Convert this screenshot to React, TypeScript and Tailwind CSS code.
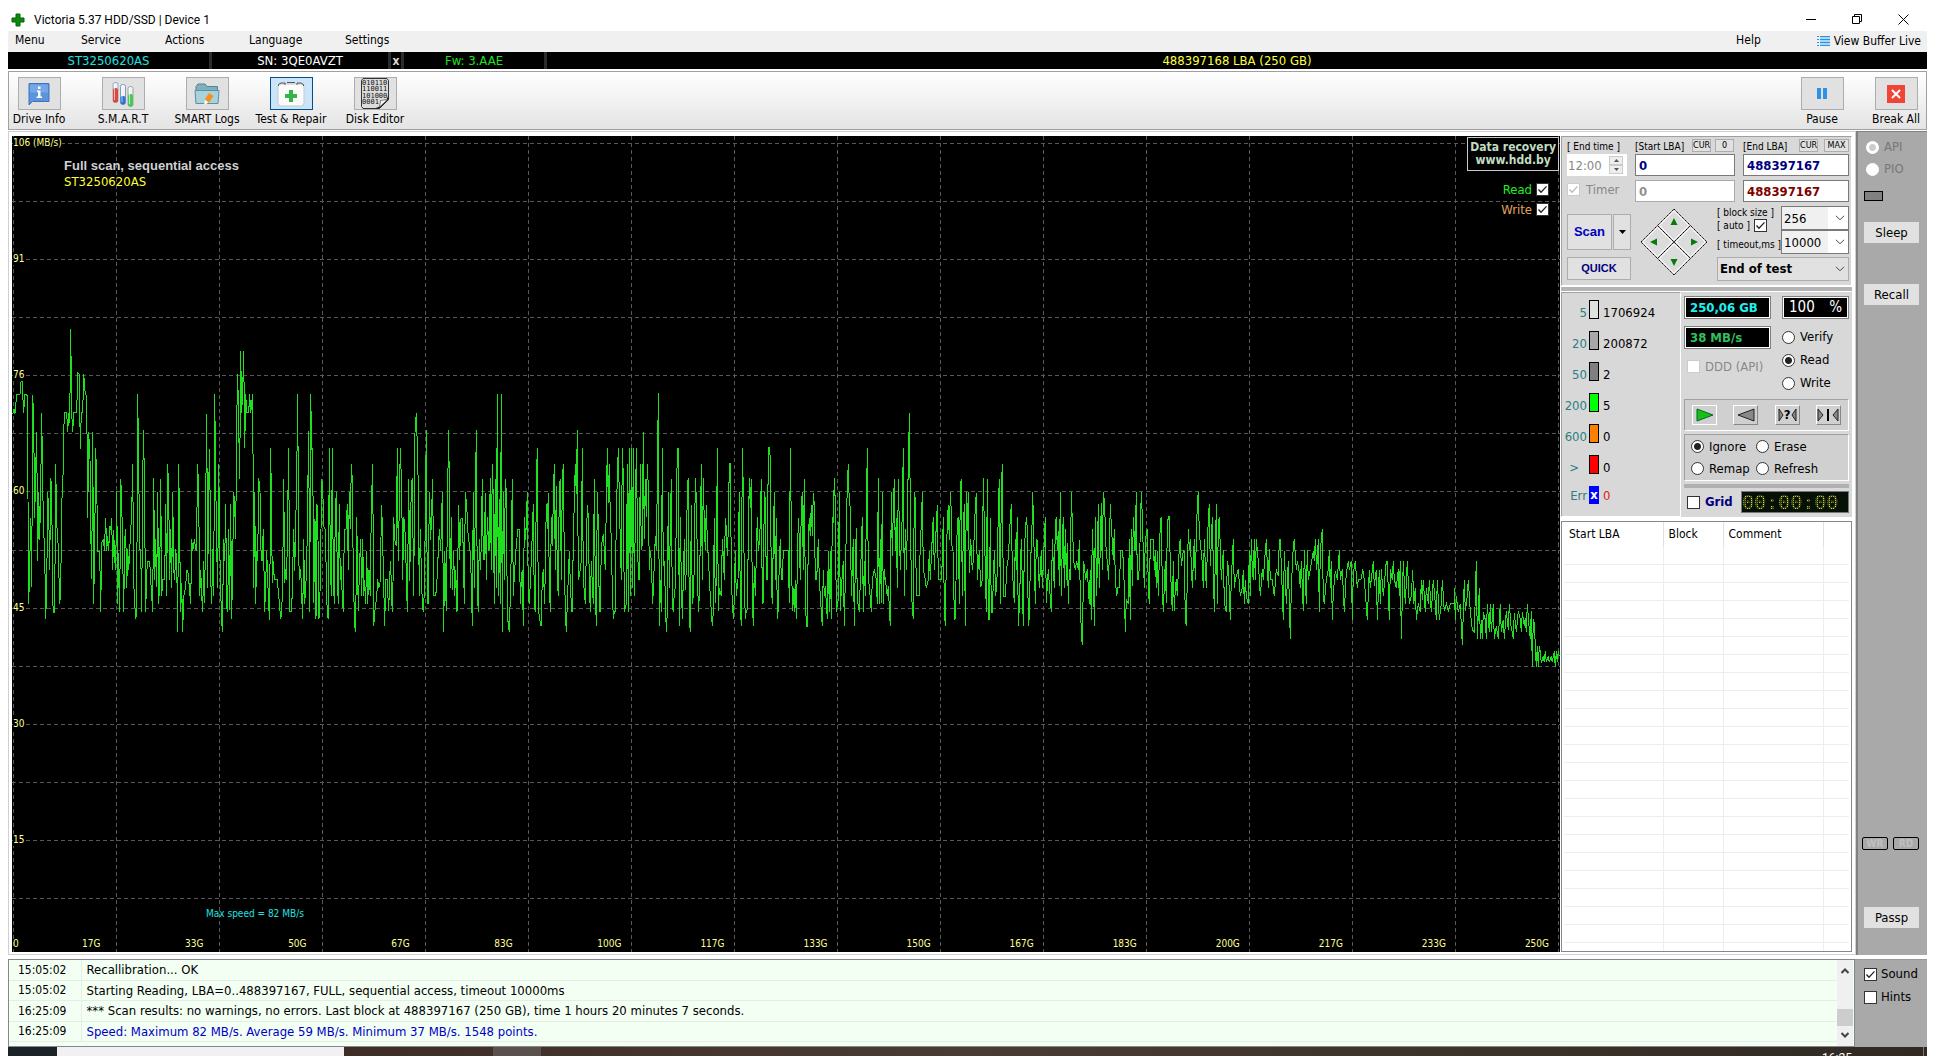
import { ReactNode } from "react";
import clsx from "clsx";

interface TraceBlock {
    x: number;
    y: number;
    points: string;
}

// Read speed curve. Every block has its own origin, points are "x,y" in thirds of a plot unit
const trace: TraceBlock[] = [
    {
        x: 0,
        y: 320,
        points:
            "38,285 42,270 45,283 50,225 60,225 65,162 68,225 71,280 74,225 82,228 84,540 86,852 89,740 92,595 95,803 98,226 101,310 104,597 107,450 110,337 113,725 116,517 119,660 122,505 125,280 128,500 131,635 134,700 137,898 140,810 143,517 146,575 149,750 152,475 155,510 158,850 161,878 164,878 167,433 170,620 173,640 176,740 179,852 182,820 185,540 188,530 191,332 194,280 200,280 203,337 206,282 209,310 212,28 215,280 218,337 221,280 230,280 233,160 238,165 241,388 244,280 248,280 251,163 256,225 260,228 263,597 266,337 270,420 272,625 275,778 278,337 281,852 284,670 287,385 290,490 293,695 299,695 302,878 305,670 311,660 313,695 317,595 320,695 323,650 326,695 329,620 332,630 335,595 338,750 341,632 344,720 347,750 350,515 353,852 356,700 359,877 362,478 365,540 371,877 374,660 377,628 380,805 383,690 386,750 392,635 395,580 398,433 401,790 404,850 407,898 410,880 413,223 416,445 419,690 422,690 425,877 428,465 431,332 434,595 437,877 440,760 443,725 449,725 452,780 458,877 461,475 464,780 467,660 470,802 473,518 476,852 479,780 482,478 485,828 488,780 494,780 497,555 500,828 503,433 506,518 509,780 512,630 515,805 518,518 521,750 524,780 527,690 530,720 533,937 536,433 539,660 542,877 545,790 548,937 551,830 557,800 560,752 563,752 566,780 572,852 575,660 578,695 583,660 589,695 593,433 596,530 599,830 602,750 605,828 608,878 611,725 614,850 617,545 620,283 623,805 626,490 629,388 632,780 635,852 638,690 641,830 644,223 647,480 650,690 653,805 656,433 659,660 661,780 664,870 667,937 671,660 674,725 677,555 680,865 683,877 686,628 689,870 692,555 695,898 698,725 701,517 704,560 707,660 710,300 713,163 716,320 719,480 722,94 725,280 728,210 731,94 734,387 737,225 740,280 746,280 749,223 752,280 758,223 761,805 764,517 767,852 770,695 773,725 776,475 780,517 783,690 786,725 790,630 794,877 800,695 806,860 809,900 812,385 815,620 817,790 820,725 823,780 832,780 838,850 842,898 845,878 848,780 851,478 854,790 857,750 860,780 863,570 866,387 869,877 875,877 881,628 884,755 890,475 893,223 896,720 899,780 902,750 905,830 908,898 911,660 914,852 920,750 923,530 926,335 929,877 932,223 935,390 938,387 941,850 945,600 948,898 951,555",
    },
    {
        x: 310,
        y: 380,
        points:
            "24,480 27,718 30,640 33,450 35,298 38,320 41,440 46,450 49,590 52,710 55,718 58,205 61,530 64,650 67,205 70,590 73,672 76,395 79,338 82,590 85,672 88,375 91,600 94,560 97,660 100,697 103,450 108,450 112,375 115,572 118,338 121,450 124,253 127,300 130,590 134,740 137,757 140,412 145,695 149,540 152,480 155,650 158,480 161,650 164,600 167,672 170,514 173,672 177,570 181,650 184,385 188,253 191,740 194,700 200,650 203,600 206,625 210,610 215,376 218,490 224,740 227,600 231,598 236,695 239,590 242,545 245,670 248,697 251,412 254,480 259,500 262,205 265,545 268,375 271,205 275,330 278,600 281,412 284,430 287,514 292,697 296,298 299,605 304,315 307,295 311,650 315,160 319,100 322,200 325,320 328,650 331,450 335,620 338,690 341,695 344,570 349,151 352,672 355,672 358,338 362,480 368,298 371,648 377,648 380,620 388,450 392,514 397,338 401,757 404,515 407,630 409,694 413,320 416,151 419,450 421,625 424,412 427,630 431,514 434,650 437,570 441,697 446,376 449,540 452,420 456,415 460,510 463,672 466,338 470,376 474,460 480,514 484,600 487,740 490,338 493,625 496,376 499,151 502,640 505,697 508,480 512,572 517,298 520,540 523,540 526,340 529,600 532,412 537,514 541,295 544,572 547,253 550,360 553,672 556,298 559,625 562,45 565,650 568,360 571,672 574,45 577,757 580,338 583,600 586,298 589,338 592,690 595,740 598,757 601,650 604,514 607,298 610,650 613,590 618,510 623,450 628,450 631,672 634,600 637,570 640,740 643,412 647,480 652,338 655,650 658,672 664,545 670,375 673,672 676,697 679,325 682,205 685,690 689,718 693,740 697,600 700,570 704,672 709,375 712,450 715,340 718,610 721,697 724,412 727,500 730,365 733,253 736,570 739,320 742,590 745,650 748,320 751,298 754,600 757,312 760,253 763,540 766,690 769,757 772,672 778,514 781,610 785,697 787,697 790,480 796,253 799,345 802,151 805,600 808,590 814,545 817,205 820,600 826,672 829,514 832,376 835,412 838,610 841,697 844,545 847,610 850,672 853,298 856,625 859,740 862,338 865,430 868,697 871,697 874,500 880,465 883,514 886,570 889,376 892,205 895,370 898,253 901,410 904,480 907,630 910,718 913,697 916,697 919,395 925,205 929,412 934,600 937,205 940,290 943,697 949,672 952,253 955,697 958,205 961,650 964,205 967,625 970,205 973,650 979,205 982,412 985,600",
    },
    {
        x: 630,
        y: 380,
        points:
            "28,600 31,253 34,512 37,496 40,157 43,480 46,300 49,412 52,253 55,320 58,570 61,515 64,545 68,672 71,600 76,470 79,510 82,320 85,42 88,740 91,600 94,697 97,207 100,560 103,545 106,650 109,757 112,700 115,338 118,625 121,450 124,298 127,672 130,697 133,640 136,625 142,207 145,207 148,740 151,412 154,600 157,718 163,480 166,630 169,570 172,320 175,295 178,715 181,757 184,376 187,672 190,650 193,560 196,295 199,355 205,697 208,650 211,480 214,253 217,600 220,295 223,430 226,512 229,376 232,480 238,590 241,650 247,740 250,697 253,415 256,670 259,600 262,207 265,695 268,625 274,650 277,480 280,530 283,600 286,415 289,445 292,530 295,450 298,253 301,253 304,560 307,680 311,718 316,514 319,650 324,600 328,338 331,670 334,740 337,205 340,330 343,600 346,718 349,695 352,690 355,480 358,295 361,385 364,298 367,650 370,740 373,560 376,650 382,412 385,515 388,490 391,430 394,298 397,672 400,670 403,338 406,360 409,600 412,600 415,205 418,205 421,235 424,610 427,672 430,480 433,338 436,600 439,415 442,718 445,690 448,545 451,480 454,600 457,600 460,514 475,514 478,670 481,207 484,430 487,695 490,625 493,697 496,600 499,718 502,570 505,415 508,480 511,600 514,376 517,338 520,570 523,298 526,630 529,740 532,740 535,480 538,415 541,470 544,376 547,470 550,340 553,376 556,600 560,600 565,480 568,600 571,650 577,740 580,570 583,650 586,620 592,718 595,514 598,697 601,514 604,718 607,412 610,430 613,295 616,370 619,697 625,660 628,338 631,695 634,630 640,545 643,740 646,600 649,450 652,320 655,253 658,376 661,380 664,650 670,480 673,740 676,560 679,447 682,660 688,697 692,570 697,412 700,697 703,545 706,650 709,410 712,205 715,600 718,620 724,697 727,600 733,570 739,600 742,672 745,295 748,672 751,480 754,670 757,338 760,672 763,570 766,600 772,650 775,620 781,740 784,338 787,530 790,390 793,298 796,515 799,415 802,625 805,298 808,430 811,570 817,405 820,205 823,650 826,450 830,570 833,300 835,300 838,100 841,376 844,610 847,690 850,718 853,338 856,360 859,648 868,648 871,480 874,440 877,338 880,570 886,600 889,625 895,600 898,514 901,600 907,470 910,412 913,570 916,500 922,376 925,600 934,600 937,545 940,412 943,690 946,740 949,545 952,430 955,376 958,480 961,338",
    },
    {
        x: 950,
        y: 400,
        points:
            "2,280 6,440 9,455 12,600 15,660 18,545 22,370 25,352 28,612 31,260 34,238 37,590 40,400 43,315 46,680 49,278 52,395 55,278 58,520 62,420 67,512 70,480 76,320 79,280 82,540 88,455 92,562 97,540 100,235 103,376 109,638 112,238 115,660 118,660 121,355 124,638 127,638 133,455 137,590 142,520 145,330 148,238 151,612 154,275 157,193 160,590 166,590 172,485 175,480 179,390 184,315 187,510 193,610 196,420 199,510 202,352 205,680 208,625 214,420 220,680 223,450 229,352 232,385 235,680 238,655 241,500 245,420 248,278 251,400 256,612 259,420 262,422 268,565 274,453 277,565 283,420 286,352 289,610 295,510 304,638 307,420 313,565 316,380 319,352 322,450 325,395 328,560 331,278 334,590 337,430 340,352 343,565 346,388 349,540 352,430 355,612 358,510 361,540 364,278 368,400 371,485 376,510 380,485 385,510 388,422 391,590 394,705 397,737 401,485 407,540 412,510 418,612 421,510 424,660 427,388 430,480 433,680 436,352 440,590 445,315 448,565 454,312 457,510 460,278 464,315 467,430 476,540 481,315 484,375 490,480 493,390 496,540 500,590 503,565 508,565 512,453 518,453 523,560 526,697 529,600 535,612 538,420 541,660 544,388 547,560 550,352 555,455 559,278 562,540 566,540 570,430 574,278 577,350 583,565 586,420 592,388 595,570 598,612 601,420 610,420 613,510 616,453 619,565 622,455 625,590 631,370 634,352 637,560 640,638 646,485 649,610 652,380 655,352 658,352 661,500 667,635 670,485 673,635 676,565 679,540 682,590 688,440 691,420 694,500 700,453 703,455 706,660 709,680 712,540 715,388 718,450 721,420 727,565 733,420 736,540 742,310 745,278 748,400 757,490 760,565 763,420 769,565 775,350 778,315 781,500 787,352 793,638 799,315 802,612 805,375 808,352 814,540 820,453 823,610 829,638 832,485 835,500 841,660 844,540 850,420 853,565 856,540 865,510 871,590 877,565 880,510 883,612 886,540 889,590 895,612",
    },
    {
        x: 1200,
        y: 400,
        points:
            "148,453 151,590 154,420 157,510 160,540 163,420 166,540 169,420 175,485 181,590 187,510 190,540 196,455 199,420 205,565 208,450 211,540 217,540 223,590 229,510 235,530 238,420 241,420 244,500 250,660 253,455 259,612 265,485 271,718 274,565 280,440 283,420 289,510 292,485 298,520 301,565 304,485 310,635 313,453 319,612 322,453 325,540 331,510 340,455 343,485 346,420 350,510 355,420 358,638 361,455 367,388 370,600 373,612 379,540 385,510 388,453 391,565 394,485 397,660 400,580 406,515 412,540 418,453 421,540 427,510 433,638 439,520 445,485 448,510 454,485 457,660 460,520 466,485 472,565 475,540 484,538 488,510 493,540 502,660 508,510 511,565 520,485 523,560 529,510 532,660 538,510 541,612 544,510 550,590 559,485 562,485 568,660 571,510 577,540 580,485 583,540 589,565 595,510 598,590 601,485 604,718 610,485 616,612 622,485 628,612 634,590 638,510 641,612 646,565 649,660 655,612 661,638 664,540 667,600 670,540 676,638 679,565 685,612 688,540 694,638 700,540 706,612 709,660 712,540 718,660 724,612 727,540 733,635 739,612 745,635 751,612 763,612 763,565 766,660 769,590 775,638 781,612 787,737 793,540 796,635 802,590 805,540 811,635 817,690 823,697 826,590 829,485 832,718 838,565 841,718 844,660 847,718 850,638 856,660 859,718 862,612 868,697 871,612 874,697 880,612 883,718 889,680 892,700 895,718 901,612 904,697 910,660 913,718 919,635 925,690 928,612 934,690 937,697 940,718 943,640 949,697 955,635 961,660 964,697 967,638 973,680 976,655 979,697 982,612 988,690 991,718 994,635 997,803 1000,660 1003,670 1006,738 1009,803 1012,738 1015,803 1018,738 1021,755 1024,790 1030,770 1033,788 1036,755 1039,788 1045,770 1048,788 1054,770 1057,788 1060,770 1063,755 1066,803 1069,755 1072,788 1075,755 1078,770",
    },
];

const tracePoints = trace
    .flatMap((block) =>
        block.points.split(" ").map((pair) => {
            const [px, py] = pair.split(",").map(Number);
            return `${(block.x + px / 3).toFixed(1)},${(block.y + py / 3).toFixed(1)}`;
        })
    )
    .join(" ");

// Plot area
const PLOT = { x: 12, y: 137, width: 1548, height: 815 };

const verticals = Array.from({ length: 16 }, (_, i) => 13 + i * 103);
const horizontals = Array.from({ length: 14 }, (_, i) => 144 + i * 58);

const speedLabels = ["106 (MB/s)", "91", "76", "60", "45", "30", "15"];
const sizeLabels = ["17G", "33G", "50G", "67G", "83G", "100G", "117G", "133G", "150G", "167G", "183G", "200G", "217G", "233G", "250G"];

const counters = [
    { label: "5", value: "1706924", color: "bg-[#e0e0e0]" },
    { label: "20", value: "200872", color: "bg-[#a8a8a8]" },
    { label: "50", value: "2", color: "bg-[#808080]" },
    { label: "200", value: "5", color: "bg-[#00ff00]" },
    { label: "600", value: "0", color: "bg-[#ff8000]" },
    { label: ">", value: "0", color: "bg-[#ff0000]" },
];

const logLines = [
    { time: "15:05:02", text: "Recallibration... OK" },
    { time: "15:05:02", text: "Starting Reading, LBA=0..488397167, FULL, sequential access, timeout 10000ms" },
    { time: "16:25:09", text: "*** Scan results: no warnings, no errors. Last block at 488397167 (250 GB), time 1 hours 20 minutes 7 seconds." },
    { time: "16:25:09", text: "Speed: Maximum 82 MB/s. Average 59 MB/s. Minimum 37 MB/s. 1548 points.", info: true },
];

interface FieldProps {
    label?: ReactNode;
    name?: string;
    checked?: boolean;
    disabled?: boolean;
    className?: string;
    ariaLabel?: string;
}

function Check({ label, checked, disabled, className, ariaLabel }: FieldProps) {
    return (
        <label className={clsx("flex items-center gap-1 whitespace-nowrap", className)}>
            <span className="grid shrink-0">
                <input
                    type="checkbox"
                    defaultChecked={checked}
                    disabled={disabled}
                    aria-label={ariaLabel}
                    className="peer col-start-1 row-start-1 size-[13px] appearance-none border border-[#333] bg-white disabled:border-[#ccc]"
                />
                <svg
                    viewBox="0 0 13 13"
                    className={clsx(
                        "pointer-events-none invisible col-start-1 row-start-1 size-[13px] fill-none peer-checked:visible",
                        disabled ? "stroke-[#bbb]" : "stroke-[#222]"
                    )}
                >
                    <path d="M2.5 6.5 5 9.2 10.5 3.4" strokeWidth="1.3" />
                </svg>
            </span>
            {label}
        </label>
    );
}

function Radio({ label, name, checked, disabled, className }: FieldProps) {
    return (
        <label className={clsx("flex items-center gap-[5px] whitespace-nowrap", className)}>
            <input
                type="radio"
                name={name}
                defaultChecked={checked}
                disabled={disabled}
                className="size-[13px] shrink-0 appearance-none rounded-full border border-[#333] bg-white checked:bg-[radial-gradient(circle,#222_0_3px,#fff_4px)] disabled:border-white disabled:checked:bg-[radial-gradient(circle,#ccc_0_3px,#fff_4px)]"
            />
            {label}
        </label>
    );
}

function Select({ value, label, className }: { value: string; label: string; className: string }) {
    return (
        <span className="relative block">
            <select aria-label={label} className={clsx("w-full appearance-none pl-[2px] text-[13px] text-black", className)}>
                <option>{value}</option>
            </select>
            <svg viewBox="0 0 10 6" className="pointer-events-none absolute top-1/2 right-1 h-[6px] w-[10px] -translate-y-1/2 fill-none stroke-[#444]">
                <path d="M1 0.8 5 4.8 9 0.8" />
            </svg>
        </span>
    );
}

function ToolButton({ label, active, wide, children }: { label: string; active?: boolean; wide?: boolean; children: ReactNode }) {
    return (
        <button className={clsx("flex flex-col items-center whitespace-nowrap", wide ? "w-[50px]" : "w-[60px]")}>
            <span
                className={clsx(
                    "flex h-[33px] w-[43px] items-center justify-center border",
                    active ? "border-[#00508f] bg-[#cce4f7]" : "border-[#adadad] bg-[#e1e1e1]"
                )}
            >
                {children}
            </span>
            <span className="leading-[18px]">{label}</span>
        </button>
    );
}

function InfoIcon() {
    return (
        <svg width="22" height="24" viewBox="0 0 22 24">
            <path d="M1 1.5h20v18H4.5L1 23z" fill="#5b93dc" stroke="#3f74bd" />
            <path d="M2 2.5h18v8H2z" fill="#74a6e8" />
            <path d="M10 4.500h2.500V7H10zM9 8.500h3.500v6H14V16H8.500v-1.500H10V10H9z" fill="#fff" />
        </svg>
    );
}

function TubesIcon() {
    return (
        <svg width="22" height="26" viewBox="0 0 22 26">
            <rect x="1" y="1.500" width="5" height="20" rx="2" fill="#eef3f6" stroke="#9ab" />
            <rect x="1" y="7" width="5" height="14.500" rx="2" fill="#d9473f" />
            <path d="M2.500 3v16" stroke="#fff" opacity=".6" />
            <rect x="8.500" y="3.500" width="5" height="20" rx="2" fill="#eef3f6" stroke="#89b" />
            <rect x="8.500" y="15" width="5" height="8.500" rx="2" fill="#2f74d0" />
            <path d="M10 5v16" stroke="#fff" opacity=".6" />
            <rect x="16" y="5.500" width="5" height="20" rx="2" fill="#eef3f6" stroke="#9a9" />
            <rect x="16" y="13" width="5" height="12.500" rx="2" fill="#4bc657" />
            <path d="M17.500 7v16" stroke="#fff" opacity=".6" />
        </svg>
    );
}

function FolderIcon() {
    return (
        <svg width="26" height="24" viewBox="0 0 26 24">
            <path d="M2 4.500 4 2h7l2 2.500h10.500V21H2z" fill="#7fb0bd" stroke="#4f8594" />
            <path d="M1 8.500h24L24 21.500H2z" fill="#a9d2dc" stroke="#5b92a1" />
            <path d="m15 11 4.500 3-4 6-5 2.500.5-5.500z" fill="#f3921e" />
            <path d="m11 17.500 3.500 3L10 23z" fill="#fff" />
        </svg>
    );
}

function RepairIcon() {
    return (
        <svg width="28" height="26" viewBox="0 0 28 26">
            <rect x="1" y="3" width="26" height="22" rx="3" fill="#fbfbfb" stroke="#c3ccd2" />
            <path d="M1.500 5V3.500L4 2h4M10 1.500h8M20 2h4l2.500 1.500V5M8 2v2M20 2v2" fill="none" stroke="#555" />
            <path d="M12 9h4v4h4v4h-4v4h-4v-4H8v-4h4z" fill="#34b54a" />
        </svg>
    );
}

function EditorIcon() {
    return (
        <svg width="30" height="31" viewBox="0 0 30 31">
            <path d="M3 .5h24l1.500 2v19l-9 9H3l-1.500-2v-26z" fill="#dcdcdc" stroke="#333" />
            <path d="M28.500 17v5l-9 8.500h-5l5-2 1-6 6-1z" fill="#222" />
            <path d="m19.500 29 1-6.500 7-1z" fill="#fafafa" stroke="#555" strokeWidth=".6" />
            <g className="font-['DejaVu_Sans_Mono',monospace] text-[7px]" fill="#111">
                <text x="2" y="7">010110</text>
                <text x="2" y="13">110011</text>
                <text x="2" y="20">101000</text>
                <text x="2" y="26">0001</text>
            </g>
        </svg>
    );
}

function Plot() {
    return (
        <div className="relative min-h-[480px] min-w-0 flex-1 overflow-hidden bg-black">
            <svg
                viewBox={`${PLOT.x} ${PLOT.y} ${PLOT.width} ${PLOT.height}`}
                preserveAspectRatio="none"
                className="absolute inset-0 size-full"
            >
                <g stroke="#585858" strokeDasharray="4 3" shapeRendering="crispEdges">
                    {verticals.map((x) => (
                        <line key={x} x1={x + 0.5} x2={x + 0.5} y1={PLOT.y} y2={PLOT.y + PLOT.height} />
                    ))}
                    {horizontals.map((y) => (
                        <line key={y} x1={PLOT.x} x2={PLOT.x + PLOT.width} y1={y + 0.5} y2={y + 0.5} />
                    ))}
                </g>
                <polyline points={tracePoints} fill="none" stroke="#1fe01f" vectorEffect="non-scaling-stroke" shapeRendering="crispEdges" />
            </svg>

            {speedLabels.map((label, i) => (
                <span
                    key={label}
                    className="absolute left-px mt-px bg-black text-[10px] leading-3 text-[#ffff90]"
                    style={{ top: `${((i * 116) / PLOT.height) * 100}%` }}
                >
                    {label}
                </span>
            ))}
            <div className="absolute inset-x-px bottom-px flex text-[10px] leading-[14px] text-[#ffff90]">
                <span className="absolute left-0">0</span>
                {sizeLabels.map((label) => (
                    <span key={label} className="flex-1 pl-[69px]">{label}</span>
                ))}
            </div>

            <div className="absolute top-[22px] left-[52px] leading-[16px]">
                <p className="font-['Liberation_Sans',sans-serif] text-[13px] font-bold text-[#d0d0d0]">Full scan, sequential access</p>
                <p className="text-[13px] text-[#ffff33]">ST3250620AS</p>
            </div>
            <p className="absolute bottom-8 left-[194px] text-[10px] leading-3 text-[#20e0e0]">Max speed = 82 MB/s</p>

            <div className="absolute top-px right-px flex flex-col items-end">
                <a href="#recovery" className="border border-[#c8c8c8] bg-black px-0.5 py-[3px] text-center text-[12px] leading-[13px] font-bold text-[#c0dcc0]">
                    Data recovery
                    <br />
                    www.hdd.by
                </a>
                <Check label={null} checked ariaLabel="Read graph" className="mt-[9px] mr-[10px] before:text-[13px] before:text-[#20f020] before:content-['Read']" />
                <Check label={null} checked ariaLabel="Write graph" className="mr-[10px] before:text-[13px] before:text-[#e0a060] before:content-['Write']" />
            </div>
        </div>
    );
}

function Range() {
    const field = "h-[22px] w-full border border-[#7a7a7a] bg-white px-[3px] text-[13px] font-bold";
    const small = "border border-[#adadad] bg-[#e1e1e1] text-center text-[9px] leading-[11px]";
    return (
        <section className="border border-[#a0a0a0] border-r-white border-b-white bg-[#d8d8d8] pt-0.5 pr-0.5 pb-1 pl-[5px]">
            <div className="flex gap-2 text-[10px] leading-[15px]">
                <div className="w-[60px]">
                    <label htmlFor="end-time" className="block h-[15px] whitespace-nowrap">[ End time ]</label>
                    <div className="flex h-[22px] items-center bg-white">
                        <input id="end-time" defaultValue="12:00" disabled className="w-[42px] pl-px text-[13px] text-[#888]" />
                        <span className="flex flex-col text-[#666]">
                            <button aria-label="Later" className="flex h-[9px] w-[14px] items-center justify-center border border-[#ccc] bg-[#eee]">
                                <svg width="5" height="3"><path d="M0 3 2.500 0 5 3z" fill="#555" /></svg>
                            </button>
                            <button aria-label="Earlier" className="flex h-[9px] w-[14px] items-center justify-center border border-[#ccc] bg-[#eee]">
                                <svg width="5" height="3"><path d="M0 0h5L2.500 3z" fill="#555" /></svg>
                            </button>
                        </span>
                    </div>
                    <Check label="Timer" checked disabled className="mt-[6px] gap-[6px] text-[13px] text-[#888]" />
                </div>
                <div className="flex-1">
                    <div className="flex h-[15px] items-start justify-between">
                        <label htmlFor="start-lba">[Start LBA]</label>
                        <span className="flex gap-1 pr-px">
                            <button className={clsx(small, "w-[19px]")}>CUR</button>
                            <button className={clsx(small, "w-[19px]")}>0</button>
                        </span>
                    </div>
                    <input id="start-lba" defaultValue="0" className={clsx(field, "text-[#000080]")} />
                    <input aria-label="Current start" defaultValue="0" disabled className={clsx(field, "mt-1 border-[#aaa] bg-[#e4e4e4] text-[#909090]")} />
                </div>
                <div className="w-[106px]">
                    <div className="flex h-[15px] items-start justify-between">
                        <label htmlFor="end-lba">[End LBA]</label>
                        <span className="flex gap-1.5">
                            <button className={clsx(small, "w-[19px]")}>CUR</button>
                            <button className={clsx(small, "w-[25px]")}>MAX</button>
                        </span>
                    </div>
                    <input id="end-lba" defaultValue="488397167" className={clsx(field, "text-[#000080]")} />
                    <input aria-label="Current end" defaultValue="488397167" className={clsx(field, "mt-1 text-[#800000]")} />
                </div>
            </div>

            <div className="mt-1 flex items-end justify-between">
                <div className="w-16 pb-px font-['Liberation_Sans',sans-serif] font-bold">
                    <div className="flex gap-px">
                        <button className="h-9 flex-1 border border-[#adadad] bg-[#e1e1e1] text-[13px] text-[#0000c0]">Scan</button>
                        <button aria-label="Scan options" className="flex h-9 w-[18px] items-center justify-center border border-[#adadad] bg-[#e1e1e1]">
                            <svg width="7" height="4"><path d="M0 0h7L3.500 4z" /></svg>
                        </button>
                    </div>
                    <button className="mt-[7px] h-[23px] w-full border border-[#adadad] bg-[#e1e1e1] text-[11px] text-[#000080]">QUICK</button>
                </div>
                <svg width="66" height="66" viewBox="-33 -33 66 66" className="mb-1.5" role="group" aria-label="Seek">
                    {[0, 90, 180, 270].map((angle) => (
                        <g key={angle} transform={`rotate(${angle})`}>
                            <path d="M0-33 16.500-16.500 0 0-16.500-16.500z" fill="#dcdcdc" stroke="#000" strokeDasharray="1.500 .7" />
                            <path d="M-14.500-16.500 0-31 14.500-16.500 0-2z" fill="none" stroke="#fff" />
                            <path d="M-3.500-17 0-24 3.500-17z" fill="#0a7a0a" />
                        </g>
                    ))}
                </svg>
                <div className="w-[132px]">
                    <div className="flex justify-between text-[10px] leading-[13px] whitespace-nowrap">
                        <div>
                            <p>[ block size ]</p>
                            <label className="flex items-center gap-1">
                                [ auto ] <Check label={null} checked ariaLabel="Auto block size" />
                            </label>
                            <p className="mt-1.5">[ timeout,ms ]</p>
                        </div>
                        <div className="w-[68px]">
                            <Select value="256" label="Block size" className="h-6 border border-[#7a7a7a] bg-[linear-gradient(90deg,#f0f0f0_0_46px,#fff_46px)]" />
                            <Select value="10000" label="Timeout" className="h-6 border border-[#7a7a7a] bg-[linear-gradient(90deg,#f0f0f0_0_46px,#fff_46px)]" />
                        </div>
                    </div>
                    <div className="mt-[3px]">
                        <Select value="End of test" label="On finish" className="h-6 border border-[#adadad] bg-[#e1e1e1] font-bold" />
                    </div>
                </div>
            </div>
        </section>
    );
}

function Results() {
    const lcd = "flex h-[23px] items-center border border-[#808080] bg-black ring-1 ring-inset ring-white";
    const dir = "flex h-[20px] w-[25px] items-center justify-center border border-white border-r-[#888] border-b-[#888] bg-[#d0d0d0]";
    return (
        <section className="flex bg-[#d8d8d8] text-[13px]">
            <div className="w-[120px] border border-[#a0a0a0] border-r-white border-b-white pt-[7px]">
                {counters.map((c) => (
                    <div key={c.label} className="flex h-[31px] items-start">
                        <span className={clsx("w-[25px] pt-[3px] text-right leading-5 text-[#2a7f7f]", c.label === ">" && "pr-2")}>{c.label}</span>
                        <span className={clsx("ml-0.5 h-[19px] w-[10px] border border-black", c.color)} />
                        <span className="pt-[3px] pl-1 leading-5">{c.value}</span>
                    </div>
                ))}
                <div className="flex items-start">
                    <span className="w-[25px] text-right leading-5 text-[#2a7f7f]">Err</span>
                    <span className="ml-0.5 flex h-[18px] w-[10px] items-center justify-center bg-[#0000ff] font-bold text-white">x</span>
                    <span className="pl-1 leading-5 text-[#e02020]">0</span>
                </div>
            </div>

            <div className="flex-1 py-1 pr-[3px] pl-[3px]">
                <div className="flex justify-between">
                    <div className="w-[87px]">
                        <output className={clsx(lcd, "pl-[5px] font-bold text-[#20f0f0]")}>250,06 GB</output>
                        <output className={clsx(lcd, "mt-[7px] pl-[5px] font-bold text-[#30c060]")}>38 MB/s</output>
                        <Check label="DDD (API)" disabled className="mt-2 ml-[3px] gap-[5px] text-[#888]" />
                    </div>
                    <div className="w-[67px]">
                        <output className={clsx(lcd, "justify-between px-[6px] text-[15px] text-white")}>
                            <span>100</span>
                            <span>%</span>
                        </output>
                        <div className="mt-[8px] flex flex-col gap-[3px] leading-5">
                            <Radio name="mode" label="Verify" />
                            <Radio name="mode" label="Read" checked />
                            <Radio name="mode" label="Write" />
                        </div>
                    </div>
                </div>

                <div className="mt-[6px] flex h-[32px] items-center justify-between border border-[#a0a0a0] border-r-white border-b-white bg-[#d0d0d0] px-[7px]">
                    <button aria-label="Forward" className={clsx(dir, "border-[#888] border-r-white border-b-white")}>
                        <svg width="18" height="14"><path d="M1 1v12l16-6z" fill="#18c010" stroke="#063" /></svg>
                    </button>
                    <button aria-label="Backward" className={dir}>
                        <svg width="18" height="14"><path d="M17 1v12L1 7z" fill="#888" stroke="#222" /></svg>
                    </button>
                    <button aria-label="Random" className={clsx(dir, "font-bold")}>
                        <svg width="6" height="14"><path d="M1 1v12l4-6z" fill="#888" stroke="#222" /></svg>
                        ?
                        <svg width="6" height="14"><path d="M5 1v12L1 7z" fill="#888" stroke="#222" /></svg>
                    </button>
                    <button aria-label="Butterfly" className={dir}>
                        <svg width="22" height="14">
                            <path d="M1 1v12l5-6zM21 1v12l-5-6z" fill="#888" stroke="#222" />
                            <path d="M10 1h2v12h-2z" />
                        </svg>
                    </button>
                </div>

                <div className="mt-[3px] grid h-[47px] grid-cols-[65px_1fr] items-center border border-[#a0a0a0] border-r-white border-b-white bg-[#d0d0d0] px-[6px]">
                    <Radio name="action" label="Ignore" checked />
                    <Radio name="action" label="Erase" />
                    <Radio name="action" label="Remap" />
                    <Radio name="action" label="Refresh" />
                </div>

                <div className="my-[3px] h-[4px] bg-[#b0b0b0]" />

                <div className="flex items-center justify-between">
                    <Check label="Grid" className="ml-[3px] gap-[5px] font-bold text-[#000080]" />
                    <div className="relative h-[22px] w-[108px] overflow-hidden border border-[#777] bg-[#061006] font-['DejaVu_Sans_Mono',monospace] text-[20px] leading-5 text-[#d8e040]">
                        00:00:00
                        <span className="absolute inset-0 bg-[repeating-linear-gradient(0deg,#061006_0_1px,transparent_1px_2px),repeating-linear-gradient(90deg,#061006_0_1px,transparent_1px_2px)] opacity-75" />
                    </div>
                </div>
            </div>
        </section>
    );
}

function Defects() {
    return (
        <div className="mt-1 min-h-0 flex-1 basis-0 overflow-hidden border border-[#828790] bg-white px-0.5">
            <table className="w-full table-fixed border-collapse text-left">
                <thead>
                    <tr className="h-[24px]">
                        <th className="w-[99px] border-r border-[#e0e0e0] pl-[5px] font-normal">Start LBA</th>
                        <th className="w-[60px] border-r border-[#e0e0e0] pl-[5px] font-normal">Block</th>
                        <th className="w-[100px] border-r border-[#e0e0e0] pl-[5px] font-normal">Comment</th>
                        <th />
                    </tr>
                </thead>
                <tbody>
                    {Array.from({ length: 24 }, (_, i) => (
                        <tr key={i} className="h-[18px] border-b border-[#ededed]">
                            <td className="border-r border-[#ededed]" />
                            <td className="border-r border-[#ededed]" />
                            <td className="border-r border-[#ededed]" />
                            <td />
                        </tr>
                    ))}
                </tbody>
            </table>
        </div>
    );
}

function Sidebar() {
    const button = "h-[21px] w-full bg-[#e1e1e1] text-[13px]";
    const led = "h-[13px] w-[27px] rounded-xs border border-black text-center text-[10px] leading-[11px] font-bold text-[#c0c0c0]";
    return (
        <aside className="flex w-[71px] flex-col border-t border-l-2 border-[#808080] bg-[#a9a9a9] pt-[5px] pr-2 pb-[27px] pl-[6px] text-[13px]">
            <Radio name="bus" label="API" checked disabled className="pl-[2px] leading-[20px] text-[#777]" />
            <Radio name="bus" label="PIO" disabled className="mt-0.5 pl-[2px] leading-[20px] text-[#777]" />
            <span className="mt-3 h-[10px] w-[19px] border border-black bg-[#808080]" />
            <button className={clsx(button, "mt-[21px]")}>Sleep</button>
            <button className={clsx(button, "mt-[41px]")}>Recall</button>
            <div className="mt-auto mb-[57px] -ml-0.5 flex gap-[5px]">
                <span className={led}>WR</span>
                <span className={led}>RD</span>
            </div>
            <button className={button}>Passp</button>
        </aside>
    );
}

export default function App() {
    return (
        <div className="flex min-h-screen flex-col overflow-hidden bg-white pr-[9px] pl-2 font-['DejaVu_Sans_Condensed','DejaVu_Sans',sans-serif] text-[12px] text-black">
            <header className="flex h-[31px] items-center pt-2 pl-[3px]">
                <svg width="14" height="14" viewBox="0 0 14 14">
                    <path d="M5 1h4v4h4v4H9v4H5V9H1V5h4z" fill="#0a8a0a" stroke="#056005" />
                </svg>
                <h1 className="ml-[9px] font-[Roboto,sans-serif] text-[12px]">Victoria 5.37 HDD/SSD | Device 1</h1>
                <div className="ml-auto flex gap-[35px] pr-[18px]">
                    <button aria-label="Minimize">
                        <svg width="11" height="11"><path d="M0 5.500h10" stroke="#000" /></svg>
                    </button>
                    <button aria-label="Restore">
                        <svg width="11" height="11" fill="none" stroke="#000"><path d="M.5 2.500h7v7h-7zM2.500 2.500v-2h7v7h-2" /></svg>
                    </button>
                    <button aria-label="Close">
                        <svg width="11" height="11" stroke="#000"><path d="m.5.500 10 10M10.500.500l-10 10" /></svg>
                    </button>
                </div>
            </header>

            <nav className="flex h-[21px] items-center bg-[#f0f0f0] pb-[3px] pl-[7px]">
                <button className="w-[66px] text-left">Menu</button>
                <button className="w-[84px] text-left">Service</button>
                <button className="w-[84px] text-left">Actions</button>
                <button className="w-[96px] text-left">Language</button>
                <button>Settings</button>
                <button className="mr-[56px] ml-auto">Help</button>
                <button className="flex items-center gap-1 pt-px pr-[6px]">
                    <svg width="13" height="12" stroke="#3090e0"><path d="M0 1.500h2M3 1.500h10M0 4.500h2M3 4.500h10M0 7.500h2M3 7.500h10M0 10.500h2M3 10.500h10" /><path d="M3 3h10M3 6h10M3 9h10" stroke="#a8d8f8" strokeWidth="2" /></svg>
                    View Buffer Live
                </button>
            </nav>

            <div className="flex h-[17px] gap-[3px] bg-[#2c2c2c] text-center text-[13px] leading-[18px] *:bg-black">
                <span className="w-[201px] text-[#20e0e0]">ST3250620AS</span>
                <span className="w-[176px] text-white">SN: 3QE0AVZT</span>
                <button className="w-[10px] text-[12px] font-bold text-[#d8d8d8]">x</button>
                <span className="w-[140px] text-[#20e020]">Fw: 3.AAE</span>
                <span className="flex-1 text-[#ffff40]">488397168 LBA (250 GB)</span>
            </div>

            <div className="mt-0.5 flex h-[59px] border border-[#a0a0a0] bg-linear-to-b from-white to-[#e4e4e4] pt-[5px] pr-[5px]">
                <div className="flex gap-6">
                    <ToolButton label="Drive Info"><InfoIcon /></ToolButton>
                    <ToolButton label="S.M.A.R.T"><TubesIcon /></ToolButton>
                    <ToolButton label="SMART Logs"><FolderIcon /></ToolButton>
                    <ToolButton label="Test & Repair" active><RepairIcon /></ToolButton>
                    <ToolButton label="Disk Editor"><EditorIcon /></ToolButton>
                </div>
                <div className="ml-auto flex gap-6">
                    <ToolButton label="Pause" wide>
                        <svg width="10" height="11"><path d="M0 0h4v11H0zM6 0h4v11H6z" fill="#2a93e8" /></svg>
                    </ToolButton>
                    <ToolButton label="Break All" wide>
                        <svg width="18" height="18"><path d="M0 0h18v18H0z" fill="#f04438" /><path d="m5 5 8 8M13 5l-8 8" stroke="#fff" strokeWidth="2" /></svg>
                    </ToolButton>
                </div>
            </div>

            <main className="mt-px flex flex-1 bg-[#f0f0f0]">
                <div className="flex min-w-0 flex-1 gap-px border border-[#d0d0d0] bg-white pt-1 pr-[3px] pb-[2px] pl-[3px]">
                    <Plot />
                    <div className="flex w-[291px] flex-col">
                        <Range />
                        <div className="my-px h-[4px] bg-[#b4b4b4]" />
                        <Results />
                        <Defects />
                    </div>
                </div>
                <Sidebar />
            </main>

            <footer className="mt-1 flex h-[88px]">
                <div className="flex min-w-0 flex-1 border border-[#828790] bg-[#f3fff3]">
                    <table className="h-max flex-1 border-collapse text-[13px]">
                        <tbody>
                            {logLines.map((line, i) => (
                                <tr key={i} className="h-[20px] border-b border-[#e4efe4]">
                                    <td className="w-[72px] border-r border-[#e4efe4] pl-[9px] text-[12px]">{line.time}</td>
                                    <td className={clsx("pl-[5px] whitespace-nowrap", line.info && "text-[#0000c8]")}>{line.text}</td>
                                </tr>
                            ))}
                        </tbody>
                    </table>
                    <div className="mr-px flex w-4 flex-col items-center bg-[#f0f0f0] py-2">
                        <svg width="8" height="6" fill="none" stroke="#444" strokeWidth="2"><path d="m.5 5 3.500-3.500L7.500 5" /></svg>
                        <span className="mt-auto mb-[6px] h-[17px] w-full bg-[#cdcdcd]" />
                        <svg width="8" height="6" fill="none" stroke="#444" strokeWidth="2"><path d="m.5 1 3.500 3.500L7.500 1" /></svg>
                    </div>
                </div>
                <div className="flex w-[72px] flex-col gap-[3px] border-t border-[#999] bg-[#a9a9a9] pt-1 pl-[9px] text-[13px] leading-5">
                    <Check label="Sound" checked />
                    <Check label="Hints" />
                </div>
            </footer>

            <div className="flex h-[9px] overflow-hidden bg-linear-to-r from-[#38241f] via-[#4a3c33] to-[#302a22]">
                <span className="w-[49px] bg-[#1c2328]" />
                <span className="w-[287px] bg-[#f2f0f2]" />
                <span className="w-[149px]" />
                <span className="w-[48px] bg-[#5a504c]" />
                <span className="mr-[71px] ml-auto pt-1 font-[Roboto,sans-serif] text-[12px] leading-[14px] text-white">16:25</span>
                <span className="mr-[3px] w-px bg-[#777]" />
            </div>
        </div>
    );
}
